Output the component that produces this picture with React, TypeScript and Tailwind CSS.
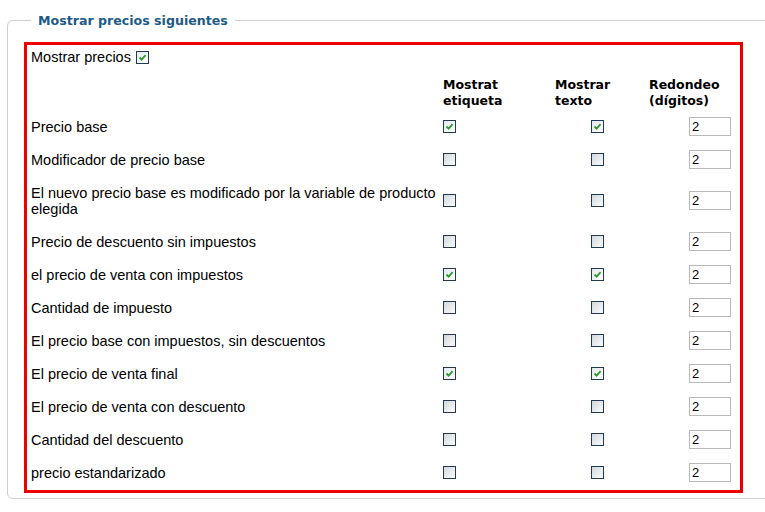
import React from "react";

type Row = { label: React.ReactNode; a: boolean; b: boolean; tall?: boolean };

const rows: Row[] = [
  { label: "Precio base", a: true, b: true },
  { label: "Modificador de precio base", a: false, b: false },
  {
    label: (
      <>
        El nuevo precio base es modificado por la variable de producto
        <br />
        elegida
      </>
    ),
    a: false,
    b: false,
    tall: true,
  },
  { label: "Precio de descuento sin impuestos", a: false, b: false },
  { label: "el precio de venta con impuestos", a: true, b: true },
  { label: "Cantidad de impuesto", a: false, b: false },
  { label: "El precio base con impuestos, sin descuentos", a: false, b: false },
  { label: "El precio de venta final", a: true, b: true },
  { label: "El precio de venta con descuento", a: false, b: false },
  { label: "Cantidad del descuento", a: false, b: false },
  { label: "precio estandarizado", a: false, b: false },
];

function Check({ checked }: { checked: boolean }) {
  return (
    <span
      className={
        "inline-flex w-[13px] h-[13px] items-center justify-center border border-[#1f3b55] " +
        (checked
          ? "bg-gradient-to-br from-[#e4e9ec] to-[#ffffff]"
          : "bg-gradient-to-br from-[#d4d8dc] to-[#fbfbfb]")
      }
    >
      {checked && (
        <svg width="9" height="9" viewBox="0 0 9 9">
          <path d="M1.5 4.5 L3.6 6.6 L7.6 2.2" fill="none" stroke="#2f9a2a" strokeWidth="1.8" />
        </svg>
      )}
    </span>
  );
}

function NumBox() {
  return (
    <div className="w-[42px] h-[19px] border border-[#b9b9b9] bg-white pl-[2px] text-[13px] leading-[17px] text-black">
      2
    </div>
  );
}

export default function App() {
  return (
    <div
      className="w-[765px] h-[512px] overflow-hidden bg-white text-black"
      style={{ fontFamily: '"Liberation Sans", Arial, sans-serif' }}
    >
      <div className="relative ml-[7px] mt-[20px] w-[800px] h-[479px] border border-[#cfcfcf] rounded-[6px] pl-[16px] pt-[21px]">
        <span
          className="absolute left-[23px] top-[-8px] bg-white px-[7px] text-[12.6px] leading-[16px] font-bold text-[#1d5a88]"
          style={{ fontFamily: '"DejaVu Sans", Verdana, sans-serif' }}
        >
          Mostrar precios siguientes
        </span>
        <div className="w-[719px] border-[3px] border-[#ee0000] pl-[4px] pb-[1px] text-[14.5px] leading-[16px]">
          <div className="h-[25px] flex items-center gap-[5px] pb-[1px]">
            <span>Mostrar precios</span>
            <Check checked={true} />
          </div>
          <div
            className="grid grid-cols-[412px_112px_94px_84px] h-[40px] items-center pt-[6px] text-[12.5px] leading-[16px] font-bold"
            style={{ fontFamily: '"DejaVu Sans", Verdana, sans-serif' }}
          >
            <div />
            <div>
              Mostrat
              <br />
              etiqueta
            </div>
            <div>
              Mostrar
              <br />
              texto
            </div>
            <div>
              Redondeo
              <br />
              (dígitos)
            </div>
          </div>
          {rows.map((r, i) => (
            <div
              key={i}
              className={
                "grid grid-cols-[412px_112px_94px_84px] items-center " +
                (r.tall ? "h-[49px]" : "h-[33px]")
              }
            >
              <div>{r.label}</div>
              <div className="flex">
                <Check checked={r.a} />
              </div>
              <div className="flex pl-[36px]">
                <Check checked={r.b} />
              </div>
              <div className="flex justify-end pr-[2px]">
                <NumBox />
              </div>
            </div>
          ))}
        </div>
      </div>
    </div>
  );
}
